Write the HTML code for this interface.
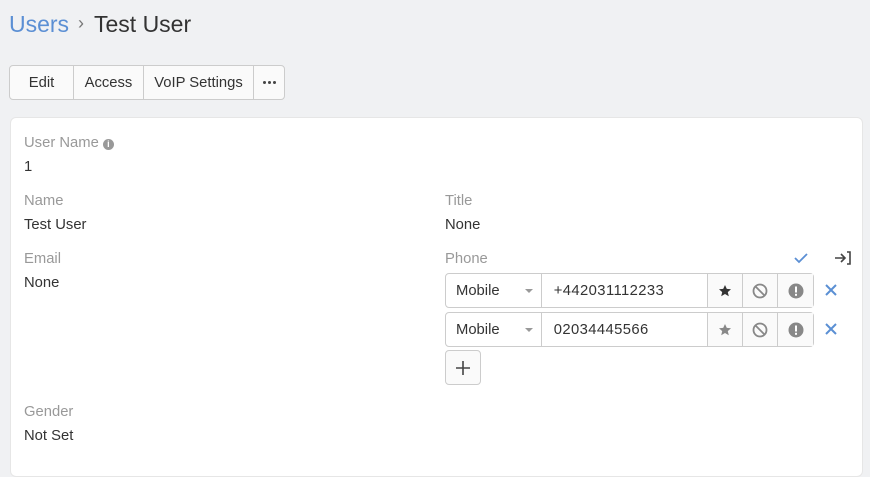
<!DOCTYPE html>
<html><head><style>
*{box-sizing:border-box;margin:0;padding:0}
body{width:870px;height:452px;overflow:hidden;background:#f0f1f3;font-family:"Liberation Sans",sans-serif;position:relative;color:#333}
.a{position:absolute;white-space:nowrap}
.lbl{font-size:14.8px;color:#999}
.val{font-size:14.8px;color:#333}
.bar{position:absolute;left:9px;top:65px;height:35px;display:flex;border:1px solid #ccc;border-radius:4px;background:#fafafa}
.bar div{font-size:14.8px;padding:0;line-height:35px;border-right:1px solid #ccc;color:#333}
.bar div:last-child{border-right:none}
.card{position:absolute;left:10px;top:117px;width:853px;height:360px;background:#fff;border-radius:6px;border:1px solid #e6e6e6}
.row{position:absolute;left:445px;width:369px;height:35px;border:1px solid #ccc;border-radius:4px;display:flex;background:#fff}
.row>div{height:33px;border-right:1px solid #ccc;position:relative;font-size:14.8px;line-height:35px}
.row>div:last-child{border-right:none}
.sel{width:96px;padding-left:10px}
.sel:after{content:"";position:absolute;right:8px;top:15px;border:4px solid transparent;border-top-color:#999;border-bottom:none}
.inp{width:167px;padding-left:12px;letter-spacing:0.4px}
.btn{width:35px;background:#fafafa;display:flex;align-items:center;justify-content:center}
</style></head><body>
<div class="a" style="left:9px;top:11px;font-size:23px;color:#5b8fd4">Users</div>
<div class="a" style="left:78px;top:13px;font-size:18px;color:#777">›</div>
<div class="a" style="left:94px;top:11px;font-size:23px;color:#333">Test User</div>
<div class="bar"><div style="width:64px;text-align:center">Edit</div><div style="width:70px;text-align:center">Access</div><div style="width:110px;text-align:center">VoIP Settings</div><div style="width:30px;display:flex;align-items:center;justify-content:center;gap:2px"><i style="width:3px;height:3px;border-radius:50%;background:#444"></i><i style="width:3px;height:3px;border-radius:50%;background:#444"></i><i style="width:3px;height:3px;border-radius:50%;background:#444"></i></div></div>
<div class="card"></div>
<div class="a lbl" style="left:24px;top:135px">User Name <span style="display:inline-block;width:11px;height:11px;border-radius:50%;background:#999;color:#fff;font-size:9px;line-height:11px;text-align:center;font-weight:bold;vertical-align:0">i</span></div>
<div class="a val" style="left:24px;top:159px">1</div>
<div class="a lbl" style="left:24px;top:193px">Name</div>
<div class="a val" style="left:24px;top:217px">Test User</div>
<div class="a lbl" style="left:445px;top:193px">Title</div>
<div class="a val" style="left:445px;top:217px">None</div>
<div class="a lbl" style="left:24px;top:251px">Email</div>
<div class="a val" style="left:24px;top:275px">None</div>
<div class="a lbl" style="left:445px;top:251px">Phone</div>
<svg class="a" style="left:793px;top:251px" width="16" height="14"><path d="M2 7l4 4 8-8" stroke="#5b8fd4" stroke-width="1.8" fill="none"/></svg>
<svg class="a" style="left:834px;top:250px" width="18" height="16"><path d="M1 8h10M7 4l4 4-4 4M13 2h3v12h-3" stroke="#444" stroke-width="1.6" fill="none"/></svg>
<div class="row" style="top:273px"><div class="sel">Mobile</div><div class="inp">+442031112233</div><div class="btn"><svg width="14" height="14"><path d="M7 1l1.8 3.9 4.2.4-3.2 2.8 1 4.1L7 10l-3.8 2.2 1-4.1L1 5.3l4.2-.4z" fill="#333"/></svg></div><div class="btn"><svg width="16" height="16"><circle cx="8" cy="8" r="6.5" stroke="#888" stroke-width="1.8" fill="none"/><path d="M3.5 3.5l9 9" stroke="#888" stroke-width="1.8"/></svg></div><div class="btn"><svg width="16" height="16"><circle cx="8" cy="8" r="7.5" fill="#888"/><rect x="7" y="3.5" width="2" height="6" fill="#fff"/><rect x="7" y="10.8" width="2" height="2" fill="#fff"/></svg></div></div>
<div class="row" style="top:312px"><div class="sel">Mobile</div><div class="inp">02034445566</div><div class="btn"><svg width="14" height="14"><path d="M7 1l1.8 3.9 4.2.4-3.2 2.8 1 4.1L7 10l-3.8 2.2 1-4.1L1 5.3l4.2-.4z" fill="#888"/></svg></div><div class="btn"><svg width="16" height="16"><circle cx="8" cy="8" r="6.5" stroke="#888" stroke-width="1.8" fill="none"/><path d="M3.5 3.5l9 9" stroke="#888" stroke-width="1.8"/></svg></div><div class="btn"><svg width="16" height="16"><circle cx="8" cy="8" r="7.5" fill="#888"/><rect x="7" y="3.5" width="2" height="6" fill="#fff"/><rect x="7" y="10.8" width="2" height="2" fill="#fff"/></svg></div></div>
<svg class="a" style="left:825px;top:284px" width="12" height="12"><path d="M1 1l10 10M11 1L1 11" stroke="#5b8fd4" stroke-width="2"/></svg>
<svg class="a" style="left:825px;top:323px" width="12" height="12"><path d="M1 1l10 10M11 1L1 11" stroke="#5b8fd4" stroke-width="2"/></svg>
<div class="a" style="left:445px;top:350px;width:36px;height:35px;border:1px solid #ccc;border-radius:4px;background:#fafafa"><svg style="position:absolute;left:10px;top:10px" width="14" height="14"><path d="M7 0v14M0 7h14" stroke="#444" stroke-width="1.6"/></svg></div>
<div class="a lbl" style="left:24px;top:404px">Gender</div>
<div class="a val" style="left:24px;top:428px">Not Set</div>
</body></html>
